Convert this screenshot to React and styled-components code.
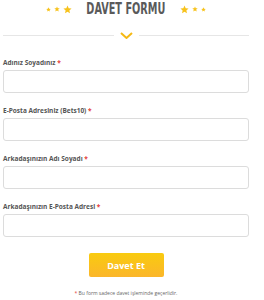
import React from "react";
import styled, { createGlobalStyle } from "styled-components";

const GlobalStyle = createGlobalStyle`
  html, body {
    margin: 0;
    padding: 0;
    background: #fff;
  }
  body {
    font-family: "Open Sans", "Liberation Sans", sans-serif;
  }
`;

const Page = styled.div`
  width: 246px;
  margin-left: 3px;
  display: flex;
  flex-direction: column;
`;

const Header = styled.div`
  display: flex;
  align-items: center;
  justify-content: center;
  gap: 15px;
  height: 18px;
`;

const Stars = styled.div`
  display: flex;
  align-items: center;
  gap: 3px;
  flex-direction: ${(p) => (p.$reverse ? "row-reverse" : "row")};
`;

const Title = styled.h1`
  margin: 0 -16px;
  display: inline-block;
  font-family: "DejaVu Sans Condensed", "DejaVu Sans", sans-serif;
  font-weight: bold;
  font-size: 15px;
  line-height: 18px;
  color: #5a5a5a;
  transform: scaleX(0.72);
`;

const Divider = styled.div`
  display: flex;
  align-items: center;
  gap: 6px;
  margin-top: 12px;
  height: 10px;
`;

const Line = styled.div`
  flex: 1;
  height: 1px;
  background: #e6e6e6;
`;

const Form = styled.form`
  display: flex;
  flex-direction: column;
  gap: 13px;
  margin-top: 18px;
`;

const Field = styled.div`
  display: flex;
  flex-direction: column;
  gap: 3px;
`;

const Label = styled.label`
  font-size: 6.5px;
  font-weight: 700;
  color: #555;
  line-height: 9px;
`;

const Req = styled.span`
  color: #e53935;
`;

const Input = styled.input`
  box-sizing: border-box;
  height: 23px;
  width: 100%;
  border: 1px solid #dcdcdc;
  border-radius: 3px;
  background: #fff;
  outline: none;
`;

const Button = styled.button`
  align-self: center;
  width: 75px;
  height: 24px;
  margin-top: 3px;
  border: none;
  border-radius: 2px;
  background: linear-gradient(#f9cb0f, #fbb62b);
  color: #fff;
  font-family: "Open Sans", sans-serif;
  font-weight: 700;
  font-size: 9px;
  cursor: pointer;
`;

const Note = styled.p`
  margin: 13px 0 0;
  text-align: center;
  font-size: 5px;
  color: #666;
`;

const Star = ({ size }) => (
  <svg width={size} height={size} viewBox="0 0 24 24">
    <path
      fill="#f7c21a"
      d="M12 1.5l3.1 7.1 7.7.7-5.8 5.1 1.7 7.6L12 18l-6.7 4 1.7-7.6-5.8-5.1 7.7-.7z"
    />
  </svg>
);

const Chevron = () => (
  <svg width="13" height="7" viewBox="0 0 13 7">
    <path d="M1 1l5.5 5L12 1" fill="none" stroke="#f5b915" strokeWidth="2" />
  </svg>
);

const fields = [
  "Adınız Soyadınız",
  "E-Posta Adresiniz (Bets10)",
  "Arkadaşınızın Adı Soyadı",
  "Arkadaşınızın E-Posta Adresi",
];

export default function App() {
  return (
    <>
      <GlobalStyle />
      <Page>
        <Header>
          <Stars>
            <Star size={5} />
            <Star size={6} />
            <Star size={9} />
          </Stars>
          <Title>DAVET FORMU</Title>
          <Stars $reverse>
            <Star size={5} />
            <Star size={6} />
            <Star size={9} />
          </Stars>
        </Header>
        <Divider>
          <Line />
          <Chevron />
          <Line />
        </Divider>
        <Form onSubmit={(e) => e.preventDefault()}>
          {fields.map((f) => (
            <Field key={f}>
              <Label>
                {f} <Req>*</Req>
              </Label>
              <Input type="text" />
            </Field>
          ))}
          <Button type="submit">Davet Et</Button>
        </Form>
        <Note>
          <Req>*</Req> Bu form sadece davet işleminde geçerlidir.
        </Note>
      </Page>
    </>
  );
}
